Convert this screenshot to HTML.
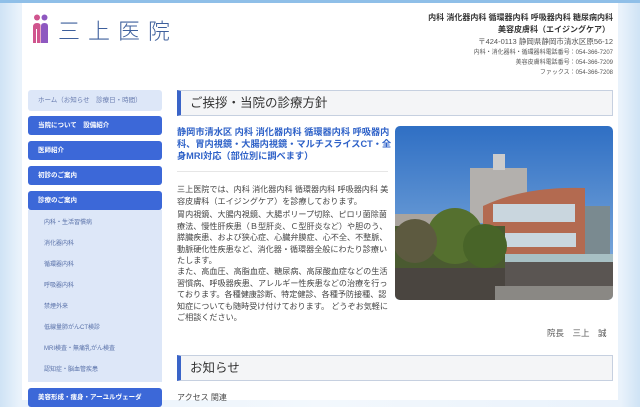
<!DOCTYPE html>
<html><head><meta charset="utf-8"><style>
*{margin:0;padding:0;box-sizing:border-box}
body{width:640px;height:400px;overflow:hidden;font-family:"Liberation Sans","Noto Sans CJK JP",sans-serif;background:linear-gradient(90deg,#cfe3f5 0%,#e9f2fb 3%,#f3f8fd 50%,#e9f2fb 97%,#cfe3f5 100%);position:relative}
.top{position:absolute;left:0;top:0;width:640px;height:3px;background:#8fbfe8}
.page{position:absolute;left:22px;top:3px;width:596px;height:397px;background:#fff}
.a{position:absolute;white-space:nowrap}
.logo{left:58px;top:14px;font-size:22px;letter-spacing:8px;color:#3d5f9c;font-family:"Noto Sans CJK JP",sans-serif;font-weight:300}
.hr{right:27px;text-align:right;color:#333}
.side{position:absolute;left:28px;width:134px;border-radius:3px;font-size:6.5px;color:#fff;padding-left:10px;line-height:19px;height:19px}
.blue{background:#3c68d8;font-weight:bold}
.sub{position:absolute;left:28px;top:210px;width:134px;height:172px;background:#dde7f8}
.sub div{position:absolute;left:16px;font-size:6px;color:#5870a8}
.h{position:absolute;left:177px;width:436px;height:26px;background:#f4f5f7;border:1px solid #c6d0e0;border-left:4px solid #3a64c8;font-size:12.5px;color:#333;padding-left:9px;line-height:24px}
.p{position:absolute;left:177px;font-size:8.1px;line-height:11.5px;color:#444;white-space:nowrap}
</style></head><body>
<div class="top"></div>
<div class="page"></div>
<svg class="a" style="left:32px;top:14px" width="18" height="30" viewBox="0 0 18 30">
<circle cx="5" cy="3.5" r="3" fill="#d0558e"/><circle cx="12.5" cy="3.5" r="3" fill="#8e58c0"/>
<path d="M1 29V13Q1 9 5 9Q8 9 8.5 11V29H5V15H4V29Z" fill="#d0558e"/>
<path d="M9 29V12Q9 9 12.5 9Q16 9 16 12V29Z" fill="#8e58c0"/>
</svg>
<div class="a logo">三上医院</div>
<div class="a hr" style="top:12px;font-size:8px;font-weight:bold">内科 消化器内科 循環器内科 呼吸器内科 糖尿病内科</div>
<div class="a hr" style="top:24px;font-size:8px;font-weight:bold;right:30px">美容皮膚科（エイジングケア）</div>
<div class="a hr" style="top:36px;font-size:7.5px;color:#555">〒424-0113 静岡県静岡市清水区原56-12</div>
<div class="a hr" style="top:47px;font-size:6px;color:#555">内科・消化器科・循環器科電話番号：054-366-7207</div>
<div class="a hr" style="top:57px;font-size:6px;color:#555">美容皮膚科電話番号：054-366-7209</div>
<div class="a hr" style="top:67px;font-size:6px;color:#555">ファックス：054-366-7208</div>

<div class="side" style="top:90px;height:21px;line-height:21px;background:#dde7f8;color:#6a7db0">ホーム（お知らせ　診療日・時間）</div>
<div class="side blue" style="top:116px">当院について　設備紹介</div>
<div class="side blue" style="top:141px">医師紹介</div>
<div class="side blue" style="top:166px">初診のご案内</div>
<div class="sub">
<div style="top:7px">内科・生活習慣病</div><div style="top:28px">消化器内科</div><div style="top:49px">循環器内科</div><div style="top:70px">呼吸器内科</div><div style="top:91px">禁煙外来</div><div style="top:112px">低線量肺がんCT検診</div><div style="top:133px">MRI検査・無痛乳がん検査</div><div style="top:154px">認知症・脳血管疾患</div></div>
<div class="side blue" style="top:191px">診療のご案内</div>
<div class="side blue" style="top:388px">美容形成・痩身・アーユルヴェーダ</div>

<div class="h" style="top:90px">ご挨拶・当院の診療方針</div>
<div class="p" style="top:126px;font-size:9.2px;line-height:12px;font-weight:bold;color:#2f62c8">静岡市清水区 内科 消化器内科 循環器内科 呼吸器内<br>科、胃内視鏡・大腸内視鏡・マルチスライスCT・全<br>身MRI対応（部位別に調べます）</div>
<div class="a" style="left:177px;top:171px;width:211px;height:1px;background:#e6e6e6"></div>
<div class="p" style="top:184px">三上医院では、内科 消化器内科 循環器内科 呼吸器内科 美<br>容皮膚科（エイジングケア）を診療しております。</div>
<div class="p" style="top:209px">胃内視鏡、大腸内視鏡、大腸ポリープ切除、ピロリ菌除菌<br>療法、慢性肝疾患（Ｂ型肝炎、Ｃ型肝炎など）や胆のう、<br>膵臓疾患、および狭心症、心臓弁膜症、心不全、不整脈、<br>動脈硬化性疾患など、消化器・循環器全般にわたり診療い<br>たします。</div>
<div class="p" style="top:266px">また、高血圧、高脂血症、糖尿病、高尿酸血症などの生活<br>習慣病、呼吸器疾患、アレルギー性疾患などの治療を行っ<br>ております。各種健康診断、特定健診、各種予防接種、認<br>知症についても随時受け付けております。 どうぞお気軽に<br>ご相談ください。</div>
<div class="a" style="left:547px;top:327px;font-size:8.5px;color:#555">院長　三上　誠</div>
<svg class="a" style="left:395px;top:126px;border-radius:5px" width="218" height="174" viewBox="0 0 218 174">
<defs><linearGradient id="s" x1="0" y1="0" x2="0" y2="1"><stop offset="0" stop-color="#2f6fc4"/><stop offset="1" stop-color="#8db6e0"/></linearGradient></defs>
<rect width="218" height="174" fill="url(#s)"/>
<rect x="75" y="42" width="57" height="55" fill="#b3b0ad"/>
<rect x="98" y="28" width="12" height="16" fill="#ccc"/>
<rect x="0" y="88" width="60" height="60" fill="#aaa49e"/>
<path d="M88 80Q130 60 190 62V150H88Z" fill="#b36a50"/>
<rect x="98" y="78" width="82" height="18" fill="#c9d6de"/>
<rect x="108" y="107" width="73" height="14" fill="#c9d6de"/>
<rect x="190" y="80" width="25" height="48" fill="#7a8a90"/>
<rect x="0" y="100" width="110" height="50" fill="#4a5a30"/>
<circle cx="60" cy="110" r="28" fill="#55702f"/><circle cx="90" cy="120" r="22" fill="#486428"/><circle cx="20" cy="115" r="22" fill="#5d5a40"/>
<rect x="110" y="128" width="108" height="8" fill="#a8c0c4"/>
<rect x="0" y="142" width="110" height="32" fill="#4a4540"/>
<rect x="110" y="136" width="108" height="24" fill="#5a5552"/>
<rect x="100" y="160" width="118" height="14" fill="#8a8884"/>
</svg>
<div class="h" style="top:355px">お知らせ</div>
<div class="a" style="left:177px;top:392px;font-size:8px;color:#444">アクセス 関連</div>
</body></html>
